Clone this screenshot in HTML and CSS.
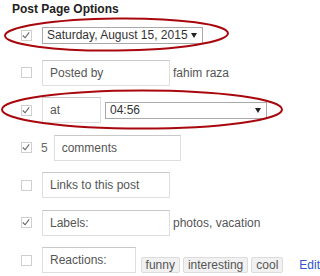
FILE: index.html
```html
<!DOCTYPE html>
<html lang="en">
<head>
    <meta charset="UTF-8">
    <meta name="viewport" content="width=device-width, initial-scale=1.0">
    <title>Post Page Options</title>
    <link rel="stylesheet" href="styles.css">
</head>
<body>
    <div class="panel">
        <h1>Post Page Options</h1>

        <div class="row">
            <span class="check on"><svg viewBox="0 0 11 11"><polyline points="2,5.5 4.5,8 9,2"/></svg></span>
            <div class="select date"><span>Saturday, August 15, 2015</span><i class="arrow"></i></div>
        </div>

        <div class="row">
            <span class="check"></span>
            <div class="field">Posted by</div>
            <span class="after">fahim raza</span>
        </div>

        <div class="row">
            <span class="check on"><svg viewBox="0 0 11 11"><polyline points="2,5.5 4.5,8 9,2"/></svg></span>
            <div class="field short">at</div>
            <div class="select time"><span>04:56</span><i class="arrow"></i></div>
        </div>

        <div class="row">
            <span class="check on"><svg viewBox="0 0 11 11"><polyline points="2,5.5 4.5,8 9,2"/></svg></span>
            <span class="count">5</span>
            <div class="field comments">comments</div>
        </div>

        <div class="row">
            <span class="check"></span>
            <div class="field">Links to this post</div>
        </div>

        <div class="row">
            <span class="check on"><svg viewBox="0 0 11 11"><polyline points="2,5.5 4.5,8 9,2"/></svg></span>
            <div class="field">Labels:</div>
            <span class="after">photos, vacation</span>
        </div>

        <div class="row">
            <span class="check"></span>
            <div class="field reactions">Reactions:</div>
            <div class="tags">
                <button>funny</button>
                <button>interesting</button>
                <button>cool</button>
                <a href="#">Edit</a>
            </div>
        </div>

        <svg class="marks" viewBox="0 0 320 276">
            <ellipse cx="116.5" cy="34.5" rx="111.5" ry="16" transform="rotate(-0.6 116.5 34.5)"/>
            <ellipse cx="142" cy="109.5" rx="140" ry="19"/>
        </svg>
    </div>
</body>
</html>
```

FILE: styles.css
```css
* {
    margin: 0;
    padding: 0;
    box-sizing: border-box;
}

body {
    font-family: 'Liberation Sans', Arial, sans-serif;
    font-size: 12px;
    color: #555;
    background: #fff;
    width: 320px;
    height: 276px;
    overflow: hidden;
}

.panel {
    position: relative;
    height: 276px;
}

h1 {
    font-size: 12px;
    font-weight: bold;
    color: #222;
    padding: 2px 0 0 12px;
    height: 22px;
    line-height: 15px;
}

.row {
    display: flex;
    align-items: center;
    height: 26px;
    padding-left: 21px;
    margin-bottom: 11.5px;
}

.check {
    width: 11px;
    height: 11px;
    border: 1px solid #cfcfcf;
    background: #fff;
    margin-right: 10px;
    flex: none;
    display: flex;
}

.check svg {
    width: 11px;
    height: 11px;
    margin: -1px 0 0 -1px;
}

.check polyline {
    fill: none;
    stroke: #666;
    stroke-width: 1.2;
}

.field {
    width: 128px;
    height: 26px;
    border: 1px solid #dedede;
    border-top-color: #c8c8c8;
    padding: 0 7px;
    line-height: 24px;
    color: #555;
    white-space: nowrap;
}

.field.short {
    width: 59px;
}

.field.comments {
    width: 127px;
}

.field.reactions {
    width: 96px;
}

.count {
    margin: 0 6px 0 -1px;
    color: #666;
}

.after {
    margin-left: 3px;
    color: #555;
}

.select {
    display: flex;
    align-items: center;
    justify-content: space-between;
    height: 17px;
    border: 1px solid #a9a9a9;
    background: #fff;
    padding: 0 5px 0 4px;
    color: #333;
}

.select.date {
    width: 161px;
}

.select.time {
    width: 162px;
    margin-left: 4px;
}

.arrow {
    width: 0;
    height: 0;
    border-left: 3.5px solid transparent;
    border-right: 3.5px solid transparent;
    border-top: 5px solid #222;
    margin-top: 1px;
}

.tags {
    display: flex;
    align-items: center;
    align-self: flex-end;
    margin-left: 5px;
    height: 16px;
}

.tags button {
    font-family: inherit;
    font-size: 12px;
    color: #555;
    background: #f1f1f1;
    border: 1px solid #dcdcdc;
    border-radius: 2px;
    height: 16px;
    padding: 0 4px;
    margin-right: 3px;
    line-height: 14px;
}

.tags a {
    color: #3355cc;
    text-decoration: none;
    margin-left: 13px;
}

.marks {
    position: absolute;
    left: 0;
    top: 0;
    width: 320px;
    height: 276px;
    pointer-events: none;
}

.marks ellipse {
    fill: none;
    stroke: #a8080d;
    stroke-width: 2;
}
```
